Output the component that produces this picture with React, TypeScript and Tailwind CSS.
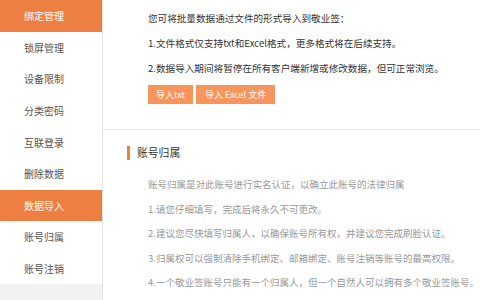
import React from 'react'

const menu = [
  { label: '绑定管理', active: true },
  { label: '锁屏管理' },
  { label: '设备限制' },
  { label: '分类密码' },
  { label: '互联登录' },
  { label: '删除数据' },
  { label: '数据导入', active: true },
  { label: '账号归属' },
  { label: '账号注销' },
]

const importNotes = [
  '您可将批量数据通过文件的形式导入到敬业签：',
  '1.文件格式仅支持txt和Excel格式，更多格式将在后续支持。',
  '2.数据导入期间将暂停在所有客户端新增或修改数据，但可正常浏览。',
]

const ownerNotes = [
  '账号归属是对此账号进行实名认证，以确立此账号的法律归属',
  '1.请您仔细填写，完成后将永久不可更改。',
  '2.建议您尽快填写归属人，以确保账号所有权，并建议您完成刷脸认证。',
  '3.归属权可以强制清除手机绑定、邮箱绑定、账号注销等账号的最高权限。',
  '4.一个敬业签账号只能有一个归属人，但一个自然人可以拥有多个敬业签账号。',
]

export default function App() {
  return (
    <div className="flex w-[480px] h-[300px] overflow-hidden bg-white font-['Noto_Sans_CJK_SC','Noto_Sans',sans-serif]">
      <div className="flex flex-col w-[103px] shrink-0 bg-[#f2f2f2] border-r border-[#e4e4e4]">
        {menu.map((item) => (
          <div
            key={item.label}
            className={
              item.active
                ? 'flex items-center h-[31.6px] pl-[24px] text-[10px] bg-[#ee7f43] text-white'
                : 'flex items-center h-[31.6px] pl-[24px] text-[10px] bg-white text-[#555]'
            }
          >
            {item.label}
          </div>
        ))}
      </div>

      <div className="flex flex-col flex-1 min-w-0">
        <div className="h-[130px] shrink-0 pl-[45px] pt-[6px] border-b border-[#e4e4e4]">
          {importNotes.map((t) => (
            <div key={t} className="h-[25px] leading-[25px] text-[9.6px] text-[#333] whitespace-nowrap">
              {t}
            </div>
          ))}
          <div className="flex gap-[3px] mt-[4px]">
            <button className="h-[19px] px-[8px] text-[9px] text-white bg-[#f8955c]">导入txt</button>
            <button className="h-[19px] px-[9px] text-[9px] text-white bg-[#f8955c]">导入 Excel 文件</button>
          </div>
        </div>

        <div className="flex-1 pl-[24px] pt-[15px]">
          <div className="flex items-center h-[15px]">
            <span className="w-[3px] h-[14px] bg-[#ee7f43]" />
            <span className="ml-[7px] text-[10.8px] text-[#333]">账号归属</span>
          </div>
          <div className="pl-[21px] pt-[12px]">
            {ownerNotes.map((t) => (
              <div key={t} className="h-[24.6px] leading-[24.6px] text-[9.5px] text-[#999] whitespace-nowrap">
                {t}
              </div>
            ))}
          </div>
        </div>
      </div>
    </div>
  )
}
